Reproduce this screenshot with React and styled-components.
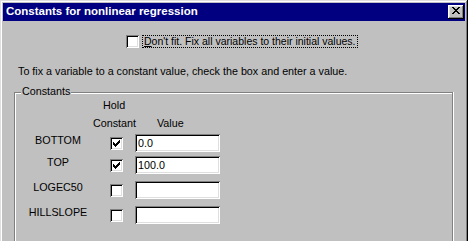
import styled, { createGlobalStyle } from 'styled-components';

const GlobalStyle = createGlobalStyle`
  html, body {
    margin: 0;
    padding: 0;
    overflow: hidden;
    background: #c0c0c0;
  }
  body {
    font-family: "Liberation Sans", Arial, sans-serif;
    font-size: 10.75px;
    color: #000;
  }
`;

const CHECK = [
    [6, 0, 1], [5, 1, 2], [0, 2, 1], [4, 2, 3], [0, 3, 2], [3, 3, 3],
    [0, 4, 5], [1, 5, 3], [2, 6, 1],
];

const CROSS = [
    [0, 0, 2], [6, 0, 2], [1, 1, 2], [5, 1, 2], [2, 2, 4], [3, 3, 2],
    [2, 4, 4], [1, 5, 2], [5, 5, 2], [0, 6, 2], [6, 6, 2],
];

function Pixels({ rows, w, h }) {
    return (
        <svg width={w} height={h} viewBox={`0 0 ${w} ${h}`} shapeRendering="crispEdges" style={{ display: 'block' }}>
            {rows.map(([x, y, len], i) => (
                <rect key={i} x={x} y={y} width={len} height={1} fill="#000" />
            ))}
        </svg>
    );
}

const rows = [
    { name: 'BOTTOM', checked: true, value: '0.0', gap: 4 },
    { name: 'TOP', checked: true, value: '100.0', gap: 4 },
    { name: 'LOGEC50', checked: false, value: '', gap: 7 },
    { name: 'HILLSLOPE', checked: false, value: '', gap: 7 },
];

export default function App() {
    return (
        <>
            <GlobalStyle />
            <Window>
                <TitleBar>
                    <Title>Constants for nonlinear regression</Title>
                    <CloseButton>
                        <Pixels rows={CROSS} w={8} h={7} />
                    </CloseButton>
                </TitleBar>
                <Body>
                    <CheckRow>
                        <CheckBox />
                        <FocusLabel>
                            <u>D</u>on't fit. Fix all variables to their initial values.
                        </FocusLabel>
                    </CheckRow>
                    <Hint>To fix a variable to a constant value, check the box and enter a value.</Hint>
                    <Group>
                        <Legend>Constants</Legend>
                        <HeadRow indent="88px">Hold</HeadRow>
                        <HeadRow indent="78px" top="5px">
                            <HeadCell width="64px">Constant</HeadCell>
                            <HeadCell>Value</HeadCell>
                        </HeadRow>
                        {rows.map((r) => (
                            <Row key={r.name} gap={r.gap}>
                                <RowLabel>{r.name}</RowLabel>
                                <CheckBox className="Cell">{r.checked && <Pixels rows={CHECK} w={7} h={7} />}</CheckBox>
                                <Field defaultValue={r.value} />
                            </Row>
                        ))}
                    </Group>
                </Body>
            </Window>
        </>
    );
}

// the dialog runs on below the frame, so its bottom edge is left out
const Window = styled.div`
    width: 468px;
    height: 100vh;
    box-sizing: border-box;
    padding: 3px 3px 0;
    display: flex;
    flex-direction: column;
    background: #c0c0c0;
    box-shadow: inset -1px 0 #000, inset 1px 1px #dfdfdf, inset -2px 0 #808080, inset 2px 2px #fff;
`;

const TitleBar = styled.div`
    height: 18px;
    flex-shrink: 0;
    display: flex;
    align-items: flex-start;
    padding-left: 3px;
    background: #000080;
`;

const Title = styled.div`
    flex: 1;
    color: #fff;
    font-weight: bold;
    font-size: 11.5px;
    line-height: 17px;
    white-space: nowrap;
`;

const CloseButton = styled.div`
    width: 16px;
    height: 14px;
    box-sizing: border-box;
    margin: 2px 1px 0 0;
    padding: 2px 0 0 4px;
    background: #c0c0c0;
    box-shadow: inset -1px -1px #000, inset 1px 1px #fff, inset -2px -2px #808080, inset 2px 2px #dfdfdf;
`;

const Body = styled.div`
    flex: 1;
    display: flex;
    flex-direction: column;
    padding: 14px 12px 0 11px;
`;

const CheckRow = styled.div`
    display: flex;
    align-items: center;
    height: 13px;
    padding-left: 112px;
`;

const CheckBox = styled.div`
    width: 13px;
    height: 13px;
    box-sizing: border-box;
    padding: 3px;
    flex-shrink: 0;
    background: #fff;
    box-shadow: inset 1px 1px #808080, inset -1px -1px #fff, inset 2px 2px #000, inset -2px -2px #dfdfdf;

    &.Cell {
        margin-left: 9px;
    }
`;

const FocusLabel = styled.span`
    margin-left: 3px;
    padding: 0 1px;
    border: 1px dotted #000;
    font-size: 10.5px;
    line-height: 11px;
    white-space: nowrap;
`;

const Hint = styled.div`
    margin: 17px 0 0 4px;
    line-height: 13px;
    white-space: nowrap;
`;

const Group = styled.div`
    position: relative;
    flex: 1;
    margin-top: 14px;
    padding-top: 6px;
    border: 1px solid #808080;
    border-bottom: none;
    box-shadow: inset 1px 1px #fff, 1px 0 #fff;
`;

const Legend = styled.span`
    position: absolute;
    top: -8px;
    left: 6px;
    padding: 0 1px;
    line-height: 13px;
    background: #c0c0c0;
`;

const HeadRow = styled.div`
    display: flex;
    line-height: 13px;
    margin-top: ${(p) => p.top || '0'};
    padding-left: ${(p) => p.indent};
`;

const HeadCell = styled.span`
    width: ${(p) => p.width || 'auto'};
`;

const Row = styled.div`
    display: flex;
    align-items: center;
    height: 18px;
    margin-top: ${(p) => p.gap}px;
`;

const RowLabel = styled.span`
    width: 86px;
    align-self: flex-start;
    text-align: center;
    line-height: 13px;
`;

const Field = styled.input`
    width: 85px;
    height: 18px;
    box-sizing: border-box;
    margin: 0 0 0 12px;
    padding: 0 0 0 3px;
    border: none;
    outline: none;
    background: #fff;
    font-family: inherit;
    font-size: 10.75px;
    color: #000;
    box-shadow: inset 1px 1px #808080, inset -1px -1px #fff, inset 2px 2px #000, inset -2px -2px #dfdfdf;
`;
